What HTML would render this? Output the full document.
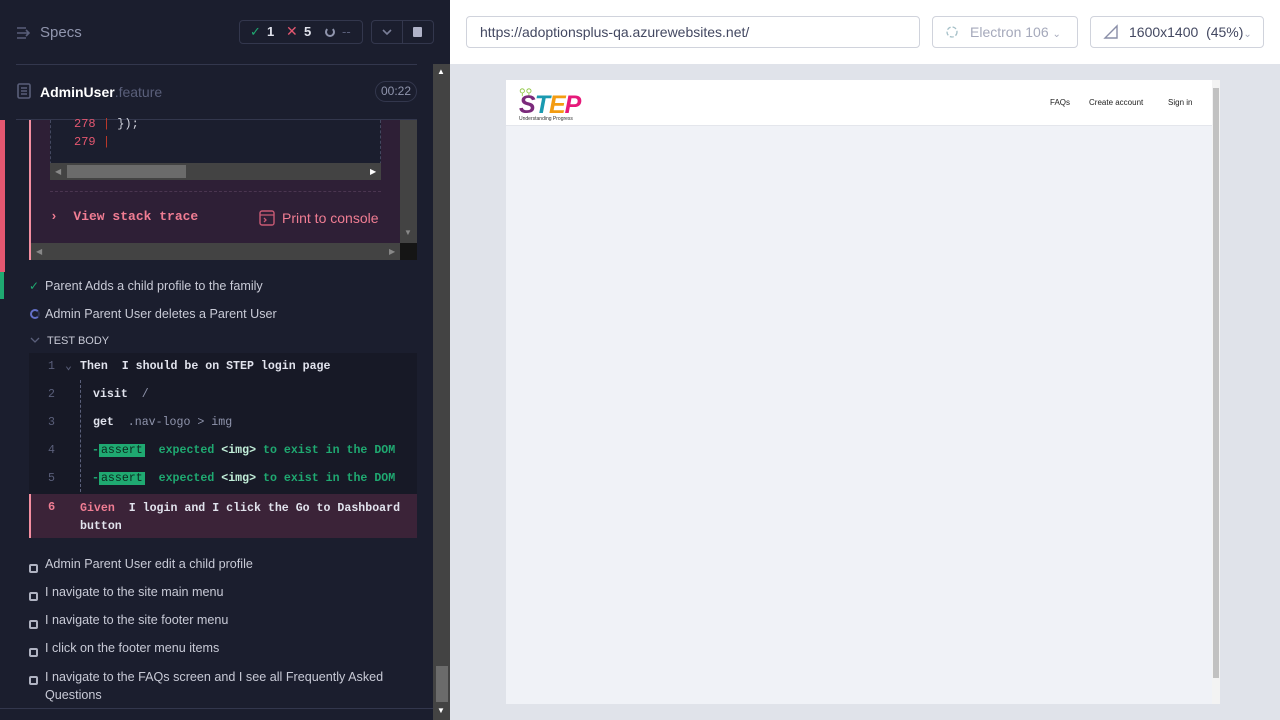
<!DOCTYPE html>
<html><head><style>
*{box-sizing:border-box;margin:0;padding:0}
body{width:1280px;height:720px;overflow:hidden;background:#1b1e2e;font-family:"Liberation Sans",sans-serif;position:relative}
.a{position:absolute}
.mono{font-family:"Liberation Mono",monospace;font-weight:bold}
.t{color:#c8cad6;font-size:12.6px}
.sq{width:9px;height:9px;border:2px solid #b0b3c2;border-radius:2px;display:inline-block}
</style></head><body>
<div class="a" style="left:0;top:0;width:450px;height:720px;background:#1b1e2e"></div>
<svg class="a" style="left:16px;top:26px" width="16" height="14"><path d="M1 2h9M1 7h12M1 12h9M10 4l3 3-3 3" stroke="#5a5f7a" stroke-width="1.6" fill="none"/></svg>
<div class="a" style="left:40px;top:24px;color:#9095ad;font-size:15px">Specs</div>
<div class="a" style="left:239px;top:20px;width:124px;height:24px;border:1px solid #33374d;border-radius:4px"></div>
<div class="a" style="left:250px;top:24px;color:#1fa971;font-size:13px">✓</div>
<div class="a" style="left:267px;top:24px;color:#e1e3ed;font-size:13px;font-weight:bold">1</div>
<div class="a" style="left:286px;top:23px;color:#e45770;font-size:14px">✕</div>
<div class="a" style="left:304px;top:24px;color:#e1e3ed;font-size:13px;font-weight:bold">5</div>
<div class="a" style="left:325px;top:27px;width:10px;height:10px;border:2px solid #9095ad;border-top-color:transparent;border-radius:50%"></div>
<div class="a" style="left:342px;top:24px;color:#5a5f7a;font-size:13px">--</div>
<div class="a" style="left:371px;top:20px;width:63px;height:24px;border:1px solid #33374d;border-radius:4px"></div>
<div class="a" style="left:402px;top:20px;width:1px;height:24px;background:#33374d"></div>
<svg class="a" style="left:381px;top:28px" width="12" height="8"><path d="M2 2l4 4 4-4" stroke="#7a7f98" stroke-width="1.6" fill="none"/></svg>
<div class="a" style="left:413px;top:27px;width:9px;height:10px;background:#b0b3c8;border-radius:1px"></div>
<div class="a" style="left:16px;top:64px;width:401px;height:1px;background:#33374d"></div>
<svg class="a" style="left:17px;top:83px" width="14" height="16"><rect x="1" y="1" width="12" height="14" rx="1.5" stroke="#5a5f7a" stroke-width="1.6" fill="none"/><path d="M4 5h6M4 8h6M4 11h6" stroke="#5a5f7a" stroke-width="1.4"/></svg>
<div class="a" style="left:40px;top:84px;color:#fff;font-size:14px;font-weight:bold">AdminUser<span style="color:#5a5f7a;font-weight:normal">.feature</span></div>
<div class="a" style="left:375px;top:81px;width:42px;height:21px;border:1px solid #33374d;border-radius:11px;color:#9095ad;font-size:12px;text-align:center;line-height:19px">00:22</div>
<div class="a" style="left:16px;top:119px;width:401px;height:1px;background:#33374d"></div>
<div class="a" style="left:0;top:120px;width:5px;height:152px;background:#e45770"></div>
<div class="a" style="left:29px;top:120px;width:371px;height:123px;background:#2e1f36;border-left:2px solid #f48ea0"></div>
<div class="a" style="left:50px;top:120px;width:331px;height:60px;background:#1b1e2e;border:1px dashed #444860;border-top:none"></div>
<div class="a mono" style="left:74px;top:115px;color:#e45770;font-size:12px;font-weight:normal;line-height:18px">278 <span style="color:#c0392b">|</span> <span style="color:#d0d2dc">});</span><br>279 <span style="color:#c0392b">|</span></div>
<div class="a" style="left:50px;top:163px;width:331px;height:17px;background:#434343"></div>
<div class="a" style="left:67px;top:165px;width:119px;height:13px;background:#6b6b6b"></div>
<div class="a" style="left:55px;top:167px;color:#888;font-size:8px">◀</div>
<div class="a" style="left:370px;top:167px;color:#fff;font-size:8px">▶</div>
<div class="a" style="left:50px;top:191px;width:331px;border-top:1px dashed #4a3550"></div>
<div class="a mono" style="left:50px;top:209px;color:#f07d93;font-size:13px">›&nbsp; View stack trace</div>
<svg class="a" style="left:259px;top:210px" width="16" height="16"><rect x="1" y="1" width="14" height="14" rx="2" stroke="#c85a74" stroke-width="1.4" fill="none"/><path d="M1 5h14M5 8l2 2-2 2" stroke="#c85a74" stroke-width="1.3" fill="none"/></svg>
<div class="a" style="left:282px;top:210px;color:#f07d93;font-size:14px">Print to console</div>
<div class="a" style="left:400px;top:120px;width:17px;height:123px;background:#434343"></div>
<div class="a" style="left:404px;top:228px;color:#888;font-size:8px">▼</div>
<div class="a" style="left:29px;top:243px;width:371px;height:17px;background:#434343;border-left:2px solid #f48ea0"></div>
<div class="a" style="left:36px;top:247px;color:#888;font-size:8px">◀</div>
<div class="a" style="left:389px;top:247px;color:#888;font-size:8px">▶</div>
<div class="a" style="left:400px;top:243px;width:17px;height:17px;background:#151515"></div>
<div class="a" style="left:0;top:272px;width:4px;height:27px;background:#1fa971"></div>
<div class="a" style="left:29px;top:279px;color:#1fa971;font-size:12px">✓</div>
<div class="a t" style="left:45px;top:279px">Parent Adds a child profile to the family</div>
<div class="a" style="left:30px;top:309px;width:10px;height:10px;border:2px solid #6470c8;border-right-color:#2e3352;border-radius:50%"></div>
<div class="a t" style="left:45px;top:307px">Admin Parent User deletes a Parent User</div>
<svg class="a" style="left:30px;top:337px" width="10" height="7"><path d="M1 1l4 4 4-4" stroke="#5a5f7a" stroke-width="1.3" fill="none"/></svg>
<div class="a" style="left:47px;top:335px;color:#c8cad6;font-size:11px">TEST BODY</div>
<div class="a" style="left:29px;top:353px;width:388px;height:185px;background:#171926"></div>
<div class="a" style="left:80px;top:380px;height:112px;border-left:1px dashed #5a5f7a"></div>
<div class="a mono" style="left:29px;top:353px;width:388px;font-size:11.6px;line-height:28px">
<div style="position:relative;height:28px"><span style="position:absolute;left:19px;color:#5a5f7a;font-weight:normal">1</span><span style="position:absolute;left:36px;color:#5a5f7a">⌄</span><span style="position:absolute;left:51px;color:#e1e3ed">Then &nbsp;I should be on STEP login page</span></div>
<div style="position:relative;height:28px"><span style="position:absolute;left:19px;color:#5a5f7a;font-weight:normal">2</span><span style="position:absolute;left:64px;color:#e1e3ed">visit &nbsp;<span style="color:#9095ad;font-weight:normal">/</span></span></div>
<div style="position:relative;height:28px"><span style="position:absolute;left:19px;color:#5a5f7a;font-weight:normal">3</span><span style="position:absolute;left:64px;color:#e1e3ed">get &nbsp;<span style="color:#9095ad;font-weight:normal">.nav-logo &gt; img</span></span></div>
<div style="position:relative;height:28px"><span style="position:absolute;left:63px;color:#1fa971;white-space:nowrap">-<span style="background:#1fa971;color:#0d2a1f;padding:0 2px;font-weight:normal">assert</span> &nbsp;expected <span style="color:#c3f0da">&lt;img&gt;</span> to exist in the DOM</span><span style="position:absolute;left:19px;color:#5a5f7a;font-weight:normal">4</span></div>
<div style="position:relative;height:28px"><span style="position:absolute;left:63px;color:#1fa971;white-space:nowrap">-<span style="background:#1fa971;color:#0d2a1f;padding:0 2px;font-weight:normal">assert</span> &nbsp;expected <span style="color:#c3f0da">&lt;img&gt;</span> to exist in the DOM</span><span style="position:absolute;left:19px;color:#5a5f7a;font-weight:normal">5</span></div>
</div>
<div class="a" style="left:29px;top:494px;width:388px;height:44px;background:#3b2338;border-left:2px solid #f48ea0"></div>
<div class="a mono" style="left:48px;top:500px;color:#f07d93;font-size:12px">6</div>
<div class="a mono" style="left:80px;top:500px;width:336px;color:#e1e3ed;font-size:11.6px;line-height:18px"><span style="color:#f07d93">Given</span> &nbsp;I login and I click the Go to Dashboard<br>button</div>
<div class="a" style="left:29px;top:560px"><span class="sq"></span></div><div class="a t" style="left:45px;top:557px">Admin Parent User edit a child profile</div>
<div class="a" style="left:29px;top:588px"><span class="sq"></span></div><div class="a t" style="left:45px;top:585px">I navigate to the site main menu</div>
<div class="a" style="left:29px;top:616px"><span class="sq"></span></div><div class="a t" style="left:45px;top:613px">I navigate to the site footer menu</div>
<div class="a" style="left:29px;top:644px"><span class="sq"></span></div><div class="a t" style="left:45px;top:641px">I click on the footer menu items</div>
<div class="a" style="left:29px;top:672px"><span class="sq"></span></div><div class="a t" style="left:45px;top:668px;line-height:18px">I navigate to the FAQs screen and I see all Frequently Asked<br>Questions</div>
<div class="a" style="left:0;top:708px;width:433px;height:1px;background:#33374d"></div>
<div class="a" style="left:433px;top:64px;width:17px;height:656px;background:#434343"></div>
<div class="a" style="left:436px;top:666px;width:12px;height:36px;background:#6b6b6b"></div>
<div class="a" style="left:437px;top:67px;color:#fff;font-size:8px">▲</div>
<div class="a" style="left:437px;top:706px;color:#fff;font-size:8px">▼</div>
<div class="a" style="left:450px;top:0;width:830px;height:64px;background:#fff"></div>
<div class="a" style="left:466px;top:16px;width:454px;height:32px;border:1px solid #d0d3dc;border-radius:4px;padding-left:13px;line-height:30px;font-size:14px;color:#434861">https://adoptionsplus-qa.azurewebsites.net/</div>
<div class="a" style="left:932px;top:16px;width:146px;height:32px;border:1px solid #d0d3dc;border-radius:4px;line-height:30px;font-size:14px;color:#a5a9bb;padding-left:37px">Electron 106 <span style="font-size:10px">⌄</span></div>
<svg class="a" style="left:944px;top:24px" width="16" height="16"><circle cx="8" cy="8" r="5" stroke="#a5c0c8" stroke-width="1.3" fill="none" stroke-dasharray="4 2"/></svg>
<div class="a" style="left:1090px;top:16px;width:174px;height:32px;border:1px solid #d0d3dc;border-radius:4px;line-height:30px;font-size:14px;color:#434861;padding-left:38px">1600x1400 &nbsp;(45%)<span style="font-size:10px;color:#a5a9bb">⌄</span></div>
<svg class="a" style="left:1103px;top:24px" width="16" height="16"><path d="M2 14h12V2L2 14z" stroke="#8a8fa8" stroke-width="1.4" fill="none"/></svg>
<div class="a" style="left:450px;top:64px;width:830px;height:656px;background:#e0e3ea"></div>
<div class="a" style="left:506px;top:80px;width:714px;height:624px;background:#f0f2f7"></div>
<div class="a" style="left:506px;top:80px;width:706px;height:46px;background:#fff;border-bottom:1px solid #e4e6ec"></div>
<div class="a" style="left:1212px;top:80px;width:8px;height:624px;background:#f3f3f3"></div>
<div class="a" style="left:1213px;top:88px;width:6px;height:590px;background:#c1c1c1"></div>
<div class="a" style="left:519px;top:87px;font-size:9px;color:#8dc63f">⚲⚲</div>
<div class="a" style="left:519px;top:91px;font-size:25px;font-weight:bold;letter-spacing:-1px;font-style:italic"><span style="color:#7b2a7b">S</span><span style="color:#1a9ab0">T</span><span style="color:#f39c12">E</span><span style="color:#e6197a">P</span></div>
<div class="a" style="left:519px;top:116px;font-size:5px;color:#333">Understanding Progress</div>
<div class="a" style="left:1050px;top:98px;font-size:8px;color:#222">FAQs</div>
<div class="a" style="left:1089px;top:98px;font-size:8px;color:#222">Create account</div>
<div class="a" style="left:1168px;top:98px;font-size:8px;color:#222">Sign in</div>
</body></html>
